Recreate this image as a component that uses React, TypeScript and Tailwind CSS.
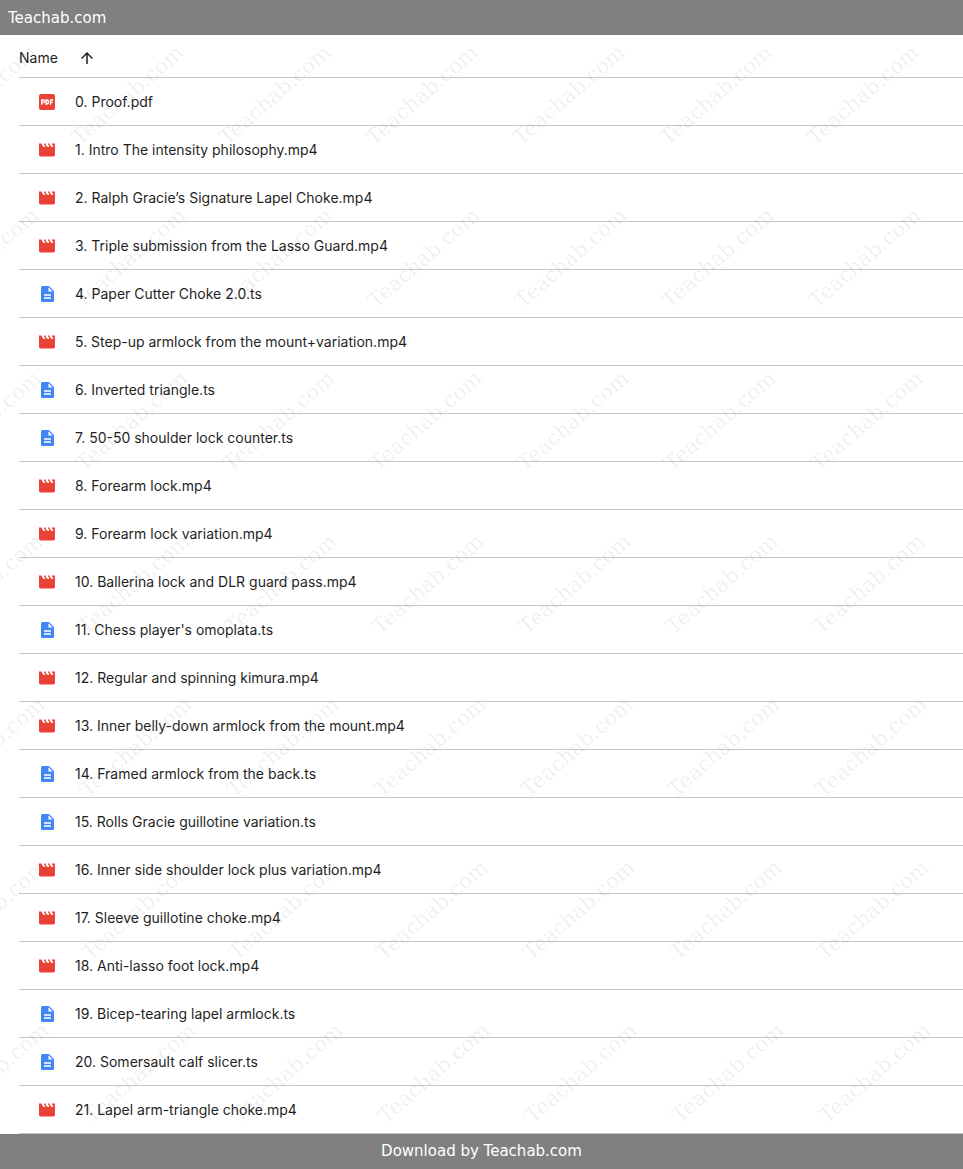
import { useState } from "react";

type FileKind = "pdf" | "video" | "doc";

interface FileItem {
  name: string;
  kind: FileKind;
}

const files: FileItem[] = [
  { name: "0. Proof.pdf", kind: "pdf" },
  { name: "1. Intro The intensity philosophy.mp4", kind: "video" },
  { name: "2. Ralph Gracie’s Signature Lapel Choke.mp4", kind: "video" },
  { name: "3. Triple submission from the Lasso Guard.mp4", kind: "video" },
  { name: "4. Paper Cutter Choke 2.0.ts", kind: "doc" },
  { name: "5. Step-up armlock from the mount+variation.mp4", kind: "video" },
  { name: "6. Inverted triangle.ts", kind: "doc" },
  { name: "7. 50-50 shoulder lock counter.ts", kind: "doc" },
  { name: "8. Forearm lock.mp4", kind: "video" },
  { name: "9. Forearm lock variation.mp4", kind: "video" },
  { name: "10. Ballerina lock and DLR guard pass.mp4", kind: "video" },
  { name: "11. Chess player's omoplata.ts", kind: "doc" },
  { name: "12. Regular and spinning kimura.mp4", kind: "video" },
  { name: "13. Inner belly-down armlock from the mount.mp4", kind: "video" },
  { name: "14. Framed armlock from the back.ts", kind: "doc" },
  { name: "15. Rolls Gracie guillotine variation.ts", kind: "doc" },
  { name: "16. Inner side shoulder lock plus variation.mp4", kind: "video" },
  { name: "17. Sleeve guillotine choke.mp4", kind: "video" },
  { name: "18. Anti-lasso foot lock.mp4", kind: "video" },
  { name: "19. Bicep-tearing lapel armlock.ts", kind: "doc" },
  { name: "20. Somersault calf slicer.ts", kind: "doc" },
  { name: "21. Lapel arm-triangle choke.mp4", kind: "video" },
];

function FileIcon({ kind }: { kind: FileKind }) {
  if (kind === "pdf") {
    return (
      <svg viewBox="0 0 16 16" className="h-4 w-4" aria-hidden="true">
        <rect width="16" height="16" rx="2" fill="#ea4335" />
        {/* PDF mark */}
        <g fill="none" stroke="#fff" strokeWidth="1.4">
          <path d="M2.7 10.700V6h1.500a1.300 1.300 0 0 1 0 2.600H2.700" />
          <path d="M7 6v4h.8a1.500 1.500 0 0 0 1.500-1.500v-1A1.500 1.500 0 0 0 7.800 6z" />
          <path d="M11.500 10.700V6h2.700M11.500 8.400h2.300" />
        </g>
      </svg>
    );
  }

  if (kind === "video") {
    return (
      <svg viewBox="2 2 20 20" className="h-4 w-4" aria-hidden="true">
        <path
          d="M18 4l2 4h-3l-2-4h-2l2 4h-3l-2-4H8l2 4H7L5 4H2v14c0 1.100.900 2 2 2h16c1.100 0 2-.900 2-2V4h-4z"
          fill="#ea4335"
        />
      </svg>
    );
  }

  return (
    <svg viewBox="0 0 16 16" className="h-4 w-4" aria-hidden="true">
      <path
        d="M3.600 0H10l5 5v9.400a1.600 1.600 0 0 1-1.600 1.600H3.600A1.600 1.600 0 0 1 2 14.400V1.600A1.600 1.600 0 0 1 3.600 0z"
        fill="#4285f4"
      />
      <path d="M9.400 1.300v4.300h4.300z" fill="#fff" />
      <path d="M5 8.200h7v1.500H5zM5 11.300h7v1.500H5z" fill="#fff" />
    </svg>
  );
}

function Watermark() {
  return (
    <div
      aria-hidden="true"
      className="pointer-events-none absolute inset-0 select-none overflow-hidden"
    >
      <div className="-mt-[22px]">
        {Array.from({ length: 7 }).map((_, row) => (
          <div
            key={row}
            className="flex h-[163px]"
            style={{ marginLeft: row * 2 - 93 }}
          >
            {Array.from({ length: 7 }).map((_, col) => (
              <div
                key={col}
                className="flex w-[147px] shrink-0 items-center justify-center"
              >
                <span className="-rotate-41 font-['DejaVu_Serif',serif] text-[21px] text-black/7">
                  Teachab.com
                </span>
              </div>
            ))}
          </div>
        ))}
      </div>
    </div>
  );
}

export default function App() {
  const [ascending, setAscending] = useState(true);
  const rows = ascending ? files : [...files].reverse();

  return (
    <div className="min-h-screen bg-white font-['Inter',sans-serif] text-sm text-[#1f1f1f]">
      <header className="flex h-[35px] items-center bg-[#808080] px-2 pt-0.5 font-['DejaVu_Sans',sans-serif] text-[15px] text-white">
        Teachab.com
      </header>

      <main className="relative pl-[19px]">
        <table className="w-full border-collapse">
          <thead>
            <tr className="h-[42px] border-b border-[#c7c7c7]">
              <th scope="col" className="p-0 pt-1 text-left font-normal">
                <button
                  type="button"
                  onClick={() => setAscending(!ascending)}
                  className="flex items-center gap-5"
                >
                  Name
                  <svg
                    viewBox="0 0 24 24"
                    fill="currentColor"
                    className={`h-[18px] w-[18px] ${ascending ? "" : "rotate-180"}`}
                    aria-hidden="true"
                  >
                    <path d="M4 12l1.410 1.410L11 7.830V20h2V7.830l5.580 5.590L20 12l-8-8-8 8z" />
                  </svg>
                </button>
              </th>
            </tr>
          </thead>
          <tbody>
            {rows.map((file) => (
              <tr key={file.name} className="h-12 border-b border-[#c7c7c7]">
                <td className="p-0 pt-0.5">
                  <div className="flex items-center gap-5 pl-5">
                    <FileIcon kind={file.kind} />
                    <span>{file.name}</span>
                  </div>
                </td>
              </tr>
            ))}
          </tbody>
        </table>
        <Watermark />
      </main>

      <footer className="flex h-[35px] items-center justify-center bg-[#808080] pt-0.5 font-['DejaVu_Sans',sans-serif] text-[15px] text-white">
        Download by Teachab.com
      </footer>
    </div>
  );
}
